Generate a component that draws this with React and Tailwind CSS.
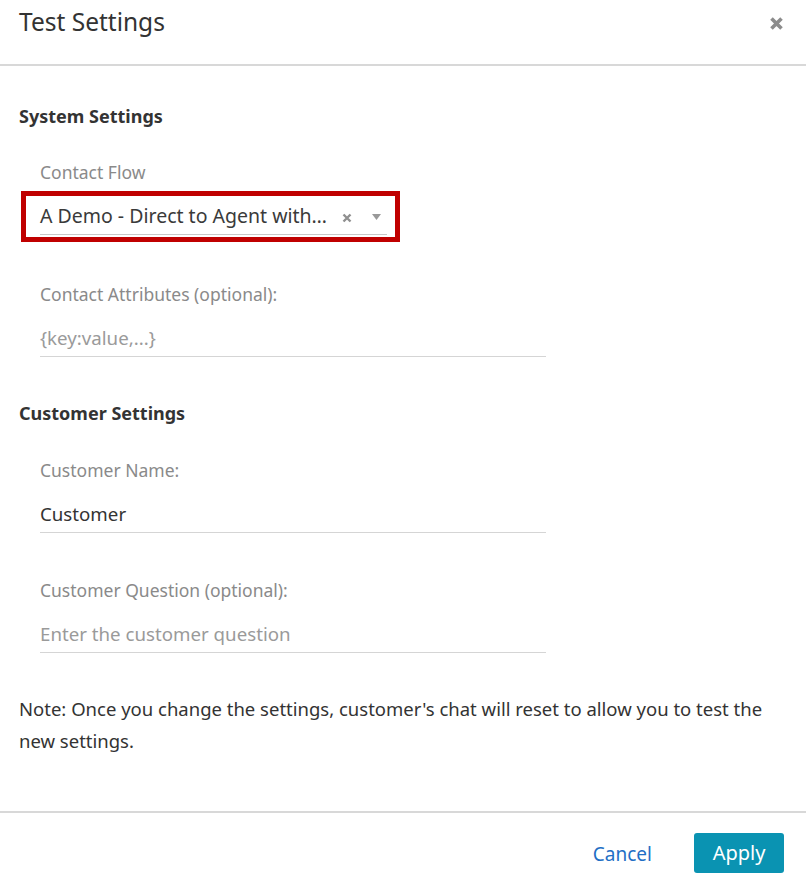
import React from "react";

const font = { fontFamily: '"Noto Sans", "Open Sans", sans-serif' };

function Field({ label, value, placeholder }) {
  return (
    <div className="pl-[21px] w-[527px]">
      <div className="text-[17.5px] leading-[20px] text-[#8a8a8a]">{label}</div>
      <div className={`mt-[22px] pb-[6px] border-b border-[#d5d5d5] text-[18.7px] leading-[24px] ${value ? "text-[#333]" : "text-[#9a9a9a]"}`}>
        {value || placeholder}
      </div>
    </div>
  );
}

export default function App() {
  return (
    <div className="w-[806px] h-[885px] bg-white flex flex-col" style={font}>
      <div className="h-[66px] shrink-0 flex items-start justify-between px-[19px] pt-[6px] border-b-2 border-[#d8d8d8]">
        <div className="text-[24.5px] leading-[32px] text-[#333]">Test Settings</div>
        <svg width="15" height="15" viewBox="0 0 15 15" className="mt-[10px] mr-[3px]">
          <path d="M2.5 2.5 L12.5 12.5 M12.5 2.5 L2.5 12.5" stroke="#8c8c8c" strokeWidth="3.6" strokeLinecap="butt" />
        </svg>
      </div>

      <div className="flex-1 flex flex-col px-[19px]">
        <div className="mt-[38px] text-[18px] leading-[24px] font-bold text-[#333]">System Settings</div>

        <div className="mt-[34px] pl-[21px] text-[17.5px] leading-[20px] text-[#8a8a8a]">Contact Flow</div>
        <div className="mt-[9px] ml-[2px] w-[379px] h-[51px] border-[5px] border-[#c00000] pl-[14px] pr-[8px] pt-[2px]">
          <div className="flex items-center h-[37px] border-b border-[#c8c8c8]">
            <span className="w-[300px] shrink-0 whitespace-nowrap text-[19.5px] leading-[24px] text-[#3a3a3a]">A Demo - Direct to Agent with…</span>
            <svg width="10" height="10" viewBox="0 0 10 10" className="ml-[2px] mt-[4px] shrink-0">
              <path d="M1.5 1.5 L8.5 8.5 M8.5 1.5 L1.5 8.5" stroke="#909090" strokeWidth="2.4" />
            </svg>
            <svg width="9" height="6" viewBox="0 0 9 6" className="ml-[20px] mt-[2px] shrink-0">
              <path d="M0 0 L9 0 L4.5 6 Z" fill="#999" />
            </svg>
          </div>
        </div>

        <div className="mt-[42px]">
          <Field label="Contact Attributes (optional):" placeholder="{key:value,...}" />
        </div>

        <div className="mt-[44px] text-[18px] leading-[24px] font-bold text-[#333]">Customer Settings</div>

        <div className="mt-[35px]">
          <Field label="Customer Name:" value="Customer" />
        </div>
        <div className="mt-[47px]">
          <Field label="Customer Question (optional):" placeholder="Enter the customer question" />
        </div>

        <div className="mt-[40px] text-[18.5px] leading-[32px] text-[#333]">
          Note: Once you change the settings, customer's chat will reset to allow you to test the new settings.
        </div>
      </div>

      <div className="h-[74px] shrink-0 border-t-2 border-[#d8d8d8] flex items-start justify-end pr-[22px] pt-[20px] gap-[42px]">
        <span className="mt-[8px] text-[19px] leading-[26px] text-[#1f6fc5]">Cancel</span>
        <button className="w-[90px] h-[40px] rounded-[3px] bg-[#0a93b2] text-white text-[20px] leading-[26px]">Apply</button>
      </div>
    </div>
  );
}
